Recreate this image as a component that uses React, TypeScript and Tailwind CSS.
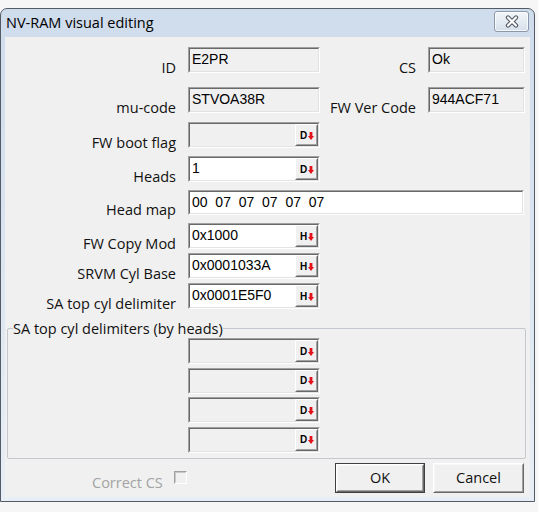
import type { ReactNode } from 'react'

const uiFont = "font-['Open_Sans','Noto_Sans',sans-serif]"
const editFont = "font-['Liberation_Sans',Arial,sans-serif]"

// 3D sunken edit box, classic Win32 look
function Sunken({ w, h = 'h-[26px]', white, children }: { w: string; h?: string; white?: boolean; children?: ReactNode }) {
  return (
    <div className={`${w} ${h} shrink-0 border border-t-[#a0a0a0] border-l-[#a0a0a0] border-r-white border-b-white`}>
      <div
        className={`flex h-full border border-t-[#696969] border-l-[#696969] border-r-[#e3e3e3] border-b-[#e3e3e3] ${
          white ? 'bg-white' : 'bg-[#f0f0f0]'
        }`}
      >
        {children}
      </div>
    </div>
  )
}

function FieldText({ children }: { children?: ReactNode }) {
  return (
    <span className={`min-w-0 flex-1 whitespace-pre pl-[2px] pt-[2px] text-[14px] leading-[16px] text-black ${editFont}`}>
      {children}
    </span>
  )
}

// little "D↓" / "H↓" format button at the end of a field
function FormatButton({ letter }: { letter: string }) {
  return (
    <div className="h-full w-[23px] shrink-0 border border-t-white border-l-white border-r-[#696969] border-b-[#696969]">
      <div className="flex h-full items-center justify-center gap-[1px] border border-t-[#f0f0f0] border-l-[#f0f0f0] border-r-[#a0a0a0] border-b-[#a0a0a0] bg-[#f0f0f0] pl-[1px] pt-[1px]">
        <span className={`text-[10px] font-black leading-none text-black ${editFont}`}>{letter}</span>
        <svg width="6" height="8" viewBox="0 0 6 8" aria-hidden>
          <path d="M1.6 0H4.4V4H6L3 8L0 4H1.6Z" fill="#e3121b" />
        </svg>
      </div>
    </div>
  )
}

function FormatField({ value, letter, white }: { value?: string; letter: string; white?: boolean }) {
  return (
    <Sunken w="w-[132px]" white={white}>
      <FieldText>{value}</FieldText>
      <FormatButton letter={letter} />
    </Sunken>
  )
}

function Label({ w = 'w-[171px]', children }: { w?: string; children: ReactNode }) {
  return (
    <span className={`${w} shrink-0 translate-y-[4px] whitespace-nowrap text-right text-[14.5px] leading-[19px] text-[#111]`}>
      {children}
    </span>
  )
}

function Row({ label, className = '', children }: { label: string; className?: string; children: ReactNode }) {
  return (
    <div className={`flex items-end ${className}`}>
      <Label>{label}</Label>
      <div className="ml-[12px] flex items-end">{children}</div>
    </div>
  )
}

function CloseGlyph() {
  return (
    <svg width="16" height="13" viewBox="0 0 16 13" aria-hidden>
      <path d="M4 2.5L12 10.5M12 2.5L4 10.5" stroke="#4f5864" strokeWidth="4.4" strokeLinecap="round" />
      <path d="M4 2.5L12 10.5M12 2.5L4 10.5" stroke="#ffffff" strokeWidth="2.2" strokeLinecap="round" />
    </svg>
  )
}

function PushButton({ label, isDefault, w }: { label: string; isDefault?: boolean; w: string }) {
  return (
    <div className={`${w} h-[30px] shrink-0 ${isDefault ? 'border border-[#3f3f3f]' : ''}`}>
      <div className="h-full border border-t-white border-l-white border-r-[#696969] border-b-[#696969]">
        <div className="flex h-full items-center justify-center border border-t-[#f7f7f7] border-l-[#f7f7f7] border-r-[#a0a0a0] border-b-[#a0a0a0] bg-[#f0f0f0] text-[14.5px] text-[#111]">
          {label}
        </div>
      </div>
    </div>
  )
}

export default function App() {
  return (
    <div className={`h-[512px] w-[538px] bg-[#f6f6f6] pt-[8px] ${uiFont}`}>
      <div className="flex h-[494px] w-[535px] flex-col rounded-t-[7px] border border-[#535c66] bg-linear-to-b from-[#cfdcec] to-[#e8eef5]">
        {/* caption */}
        <div className="flex h-[28px] shrink-0 items-start pl-[5px] pr-[5px]">
          <span className="mt-[4px] text-[14.5px] leading-[19px] text-black">NV-RAM visual editing</span>
          <div className="ml-auto mt-[2px] flex h-[21px] w-[35px] items-center justify-center rounded-[3px] border border-[#8c98a7] bg-linear-to-b from-[#f3f6f9] to-[#d6e0eb] shadow-[inset_0_0_0_1px_rgba(255,255,255,0.75)]">
            <CloseGlyph />
          </div>
        </div>

        {/* client area */}
        <div className="mx-[4px] h-[460px] shrink-0 bg-[#f0f0f0] pt-[10px]">
          <div className="flex items-end">
            <Label>ID</Label>
            <div className="ml-[12px]">
              <Sunken w="w-[132px]">
                <FieldText>E2PR</FieldText>
              </Sunken>
            </div>
            <Label w="w-[96px]">CS</Label>
            <div className="ml-[12px]">
              <Sunken w="w-[97px]">
                <FieldText>Ok</FieldText>
              </Sunken>
            </div>
          </div>

          <div className="mt-[14px] flex items-end">
            <Label>mu-code</Label>
            <div className="ml-[12px]">
              <Sunken w="w-[132px]">
                <FieldText>STVOA38R</FieldText>
              </Sunken>
            </div>
            <Label w="w-[96px]">FW Ver Code</Label>
            <div className="ml-[12px]">
              <Sunken w="w-[97px]">
                <FieldText>944ACF71</FieldText>
              </Sunken>
            </div>
          </div>

          <Row label="FW boot flag" className="mt-[9px]">
            <FormatField letter="D" />
          </Row>
          <Row label="Heads" className="mt-[8px]">
            <FormatField letter="D" value="1" white />
          </Row>
          <Row label="Head map" className="mt-[8px]">
            <Sunken w="w-[336px]" h="h-[25px]" white>
              <FieldText>00  07  07  07  07  07</FieldText>
            </Sunken>
          </Row>
          <Row label="FW Copy Mod" className="mt-[8px]">
            <FormatField letter="H" value="0x1000" white />
          </Row>
          <Row label="SRVM Cyl Base" className="mt-[4px]">
            <FormatField letter="H" value="0x0001033A" white />
          </Row>
          <Row label="SA top cyl delimiter" className="mt-[4px]">
            <FormatField letter="H" value="0x0001E5F0" white />
          </Row>

          <fieldset className="ml-[2px] mt-[10px] w-[519px] rounded-[2px] border border-[#c2c8ce] pb-[5px]">
            <legend className="ml-[5px] text-[14.5px] leading-[19px] text-[#111]">SA top cyl delimiters (by heads)</legend>
            <div className="ml-[180px] flex flex-col gap-[3.5px]">
              <FormatField letter="D" />
              <FormatField letter="D" />
              <FormatField letter="D" />
              <FormatField letter="D" />
            </div>
          </fieldset>

          <div className="mt-[4px] flex h-[30px] items-center">
            <span className="ml-[87px] translate-y-[5px] text-[14.5px] leading-[19px] text-[#a3a3a3]">Correct CS</span>
            <div className="ml-[11px] h-[13px] w-[13px] border border-t-[#a0a0a0] border-l-[#a0a0a0] border-r-white border-b-white">
              <div className="h-full border border-t-[#c9c9c9] border-l-[#c9c9c9] border-r-[#f0f0f0] border-b-[#f0f0f0] bg-[#f0f0f0]" />
            </div>
            <div className="flex-1" />
            <PushButton label="OK" isDefault w="w-[90px]" />
            <div className="ml-[8px] mr-[6px]">
              <PushButton label="Cancel" w="w-[91px]" />
            </div>
          </div>
        </div>
      </div>
    </div>
  )
}
